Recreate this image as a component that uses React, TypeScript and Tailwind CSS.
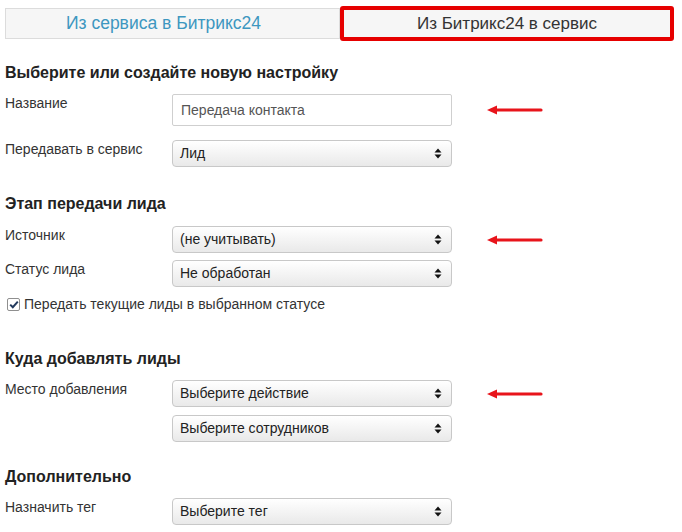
import React from 'react';

const Caret = () => (
  <svg width="8" height="11" viewBox="0 0 8 11" className="shrink-0">
    <path d="M4 0.5L7.5 4.5H0.5Z" fill="#111" />
    <path d="M4 10.5L7.5 6.5H0.5Z" fill="#111" />
  </svg>
);

const Arrow = () => (
  <svg width="60" height="12" viewBox="0 0 60 12" className="ml-[33px] shrink-0">
    <path d="M10 6H56" stroke="#e8141b" strokeWidth="3.2" strokeLinecap="round" />
    <path d="M2 6L12 1.5V10.5Z" fill="#e8141b" />
  </svg>
);

const Select = ({ value }: { value: string }) => (
  <div className="w-[280px] h-[27px] flex items-center justify-between pl-[7px] pr-[9px] border border-[#c8c8c8] rounded-[4px] bg-gradient-to-b from-white to-[#e9e9e9] text-[14px] text-[#222]">
    <span>{value}</span>
    <Caret />
  </div>
);

const Row = ({
  label,
  children,
  arrow,
  className = '',
}: {
  label?: string;
  children: React.ReactNode;
  arrow?: boolean;
  className?: string;
}) => (
  <div className={`flex items-start ${className}`}>
    <div className="w-[167px] shrink-0 pt-[1px] text-[14px] leading-[16px] text-[#333]">{label}</div>
    <div className="flex items-center">
      {children}
      {arrow && <Arrow />}
    </div>
  </div>
);

const Heading = ({ children, className = '' }: { children: React.ReactNode; className?: string }) => (
  <h3 className={`text-[16px] leading-[18px] font-bold text-[#222] ${className}`}>{children}</h3>
);

export default function App() {
  return (
    <div
      className="w-[682px] h-[532px] bg-white overflow-hidden px-[5px]"
      style={{ fontFamily: '"Liberation Sans", Arial, sans-serif' }}
    >
      {/* Tabs */}
      <div className="flex items-center pt-[6px] pr-[3px]">
        <div className="w-[335px] h-[31px] flex items-center justify-center pr-[18px] border border-[#dcdcdc] bg-[#f6f6f6] text-[17.5px] text-[#3d97c0]">
          Из сервиса в Битрикс24
        </div>
        <div className="flex-1 h-[35px] flex items-center justify-center border-[4px] border-[#e60000] rounded-[3px] bg-[#f6f6f6] text-[17px] text-[#333]">
          Из Битрикс24 в сервис
        </div>
      </div>

      <Heading className="mt-[23px]">Выберите или создайте новую настройку</Heading>

      <Row label="Название" arrow className="mt-[12px]">
        <div className="w-[280px] h-[32px] flex items-center px-[8px] border border-[#cfcfcf] rounded-[2px] bg-white text-[14px] text-[#555]">
          Передача контакта
        </div>
      </Row>
      <Row label="Передавать в сервис" className="mt-[14px]">
        <Select value="Лид" />
      </Row>

      <Heading className="mt-[28px]">Этап передачи лида</Heading>
      <Row label="Источник" arrow className="mt-[13px]">
        <Select value="(не учитывать)" />
      </Row>
      <Row label="Статус лида" className="mt-[7px]">
        <Select value="Не обработан" />
      </Row>
      <div className="mt-[9px] flex items-center gap-[4px] pl-[2px] text-[14px] leading-[16px] text-[#333]">
        <span className="w-[13px] h-[13px] flex items-center justify-center border border-[#8f8f8f] rounded-[2px] bg-white">
          <svg width="10" height="9" viewBox="0 0 10 9">
            <path d="M1.2 4.6L3.8 7.2L8.8 1.6" stroke="#233a5e" strokeWidth="2" fill="none" />
          </svg>
        </span>
        Передать текущие лиды в выбранном статусе
      </div>

      <Heading className="mt-[38px]">Куда добавлять лиды</Heading>
      <Row label="Место добавления" arrow className="mt-[12px]">
        <Select value="Выберите действие" />
      </Row>
      <Row className="mt-[8px]">
        <Select value="Выберите сотрудников" />
      </Row>

      <Heading className="mt-[26px]">Дополнительно</Heading>
      <Row label="Назначить тег" className="mt-[12px]">
        <Select value="Выберите тег" />
      </Row>
    </div>
  );
}
